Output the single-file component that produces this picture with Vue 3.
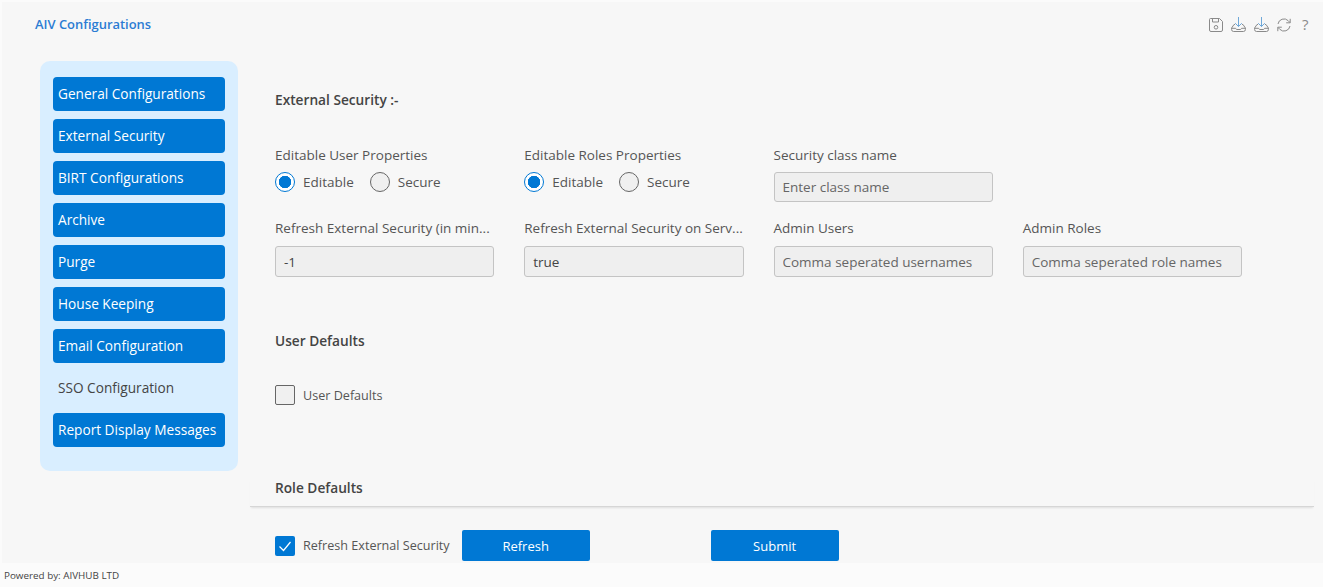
<script setup>
const menu = [
  { label: 'General Configurations', active: true },
  { label: 'External Security', active: true },
  { label: 'BIRT Configurations', active: true },
  { label: 'Archive', active: true },
  { label: 'Purge', active: true },
  { label: 'House Keeping', active: true },
  { label: 'Email Configuration', active: true },
  { label: 'SSO Configuration', active: false },
  { label: 'Report Display Messages', active: true },
];

const radioGroups = ['Editable User Properties', 'Editable Roles Properties'];

const fields = [
  { label: 'Refresh External Security (in min...', value: '-1' },
  { label: 'Refresh External Security on Serv...', value: 'true' },
  { label: 'Admin Users', placeholder: 'Comma seperated usernames' },
  { label: 'Admin Roles', placeholder: 'Comma seperated role names' },
];
</script>

<template>
  <div class="page">
    <div class="main">
      <header class="topbar">
        <span class="app-title">AIV Configurations</span>
        <div class="tools">
          <svg class="tool" viewBox="0 0 14 14"><path d="M1.500.5h9l3 3v8.500a1.500 1.500 0 0 1-1.500 1.500H2A1.500 1.500 0 0 1 .5 12V1.500a1 1 0 0 1 1-1z" /><path d="M3.500.5v3.500h6V.5" /><circle cx="7" cy="9.300" r="1.800" /></svg>
          <svg class="tool wide" viewBox="0 0 15 15"><path class="blue" d="M7.500 0v9.500M4.200 6.200l3.300 3.300 3.300-3.300" /><path d="M4 7.500H3L.6 11v1.500a2 2 0 0 0 2 2h9.800a2 2 0 0 0 2-2V11L12 7.500h-1" /><path d="M.6 11.300h4l1 1.200h4l1-1.200h3.800" /></svg>
          <svg class="tool wide" viewBox="0 0 15 15"><path class="blue" d="M7.500 0v9.500M4.200 6.200l3.300 3.300 3.300-3.300" /><path d="M4 7.500H3L.6 11v1.500a2 2 0 0 0 2 2h9.800a2 2 0 0 0 2-2V11L12 7.500h-1" /><path d="M.6 11.300h4l1 1.200h4l1-1.200h3.800" /></svg>
          <svg class="tool sync" viewBox="0 0 14 14"><path d="M1 6a6 6 0 0 1 10.200-3.300L13 4.500" /><path d="M13.200.8v4h-4" /><path d="M13 8a6 6 0 0 1-10.200 3.300L1 9.500" /><path d="M.8 13.200v-4h4" /></svg>
          <span class="help">?</span>
        </div>
      </header>

      <div class="body">
        <nav class="sidebar">
          <a v-for="item in menu" :key="item.label" class="menu-item" :class="{ on: item.active }">{{ item.label }}</a>
        </nav>

        <section class="content">
          <h3 class="title first">External Security :-</h3>

          <div class="row row-top">
            <div v-for="group in radioGroups" :key="group" class="col">
              <label class="lbl">{{ group }}</label>
              <div class="radios">
                <span class="radio checked"></span><span class="opt">Editable</span>
                <span class="radio"></span><span class="opt">Secure</span>
              </div>
            </div>
            <div class="col">
              <label class="lbl">Security class name</label>
              <input class="box" placeholder="Enter class name" />
            </div>
          </div>

          <div class="row row-fields">
            <div v-for="f in fields" :key="f.label" class="col">
              <label class="lbl">{{ f.label }}</label>
              <input class="box" :value="f.value" :placeholder="f.placeholder" />
            </div>
          </div>

          <h3 class="title user">User Defaults</h3>
          <div class="check-row user-check">
            <span class="check"></span>
            <span class="check-text">User Defaults</span>
          </div>

          <div class="role-head">
            <h3 class="title">Role Defaults</h3>
          </div>

          <div class="actions">
            <div class="check-row">
              <span class="check ticked">
                <svg viewBox="0 0 20 20"><path d="M4.500 10.500 8.500 14.500 15.500 6" /></svg>
              </span>
              <span class="check-text">Refresh External Security</span>
            </div>
            <button class="btn refresh">Refresh</button>
            <button class="btn submit">Submit</button>
          </div>
        </section>
      </div>
    </div>
    <footer class="foot">Powered by: AIVHUB LTD</footer>
  </div>
</template>

<style>
html, body {
  margin: 0;
  background: #fbfbfb;
  overflow: hidden;
}
</style>

<style scoped>
.page {
  height: 587px;
  display: flex;
  flex-direction: column;
  font-family: "Open Sans", "Noto Sans", sans-serif;
  color: #444;
}

.main {
  height: 561px;
  margin: 2px 0 0 2px;
  background: #f7f7f7;
  overflow: hidden;
}

.topbar {
  height: 59px;
  display: flex;
  justify-content: space-between;
  align-items: flex-start;
  padding: 14px 13px 0 33px;
  box-sizing: border-box;
}

.app-title {
  color: #2b7cd3;
  font-size: 12.950px;
  font-weight: 600;
  line-height: 17px;
}

.tools {
  display: flex;
  align-items: center;
  gap: 8px;
  margin-top: 1px;
}

.tool {
  width: 14px;
  height: 14px;
  fill: none;
  stroke: #8a8a8a;
  stroke-width: 1;
}

.tool.wide {
  width: 15px;
  height: 15px;
}

.tool .blue {
  stroke: #6fa8d8;
}

.tool.sync {
  margin-right: 3px;
}

.help {
  color: #8a8a8a;
  font-size: 15px;
  line-height: 15px;
  width: 8px;
}

.body {
  display: flex;
}

.sidebar {
  width: 198px;
  height: 410px;
  margin-left: 38px;
  padding: 16px 13px 0;
  box-sizing: border-box;
  background: #d9eeff;
  border-radius: 10px;
  display: flex;
  flex-direction: column;
  gap: 8px;
  flex-shrink: 0;
}

.menu-item {
  height: 34px;
  line-height: 34px;
  padding-left: 5px;
  border-radius: 4px;
  font-size: 13.650px;
  color: #444;
  white-space: nowrap;
}

.menu-item.on {
  background: #0078d4;
  color: #fff;
}

.content {
  width: 1064px;
  margin-left: 12px;
  padding-left: 25px;
  box-sizing: border-box;
}

.title {
  margin: 0;
  font-size: 13.700px;
  font-weight: 600;
  line-height: 18px;
  color: #444;
}

.title.first {
  margin-top: 30px;
}

.row {
  display: flex;
}

.row-top {
  margin-top: 37px;
}

.row-fields {
  margin-top: 17px;
}

.col {
  width: 249.250px;
  padding-right: 30px;
  box-sizing: border-box;
  flex-shrink: 0;
}

.lbl {
  display: block;
  font-size: 13.500px;
  line-height: 18px;
  color: #555;
  height: 18px;
  white-space: nowrap;
}

.radios {
  display: flex;
  align-items: center;
  height: 30px;
  margin-top: 3px;
}

.radio {
  width: 20px;
  height: 20px;
  border: 1px solid #666;
  border-radius: 50%;
  box-sizing: border-box;
  background: #f0f0f0;
  flex-shrink: 0;
}

.radio.checked {
  border: 1px solid #0078d4;
  background: radial-gradient(circle, #0078d4 0 6px, #fff 6.500px);
}

.opt {
  font-size: 13.500px;
  color: #555;
  margin: 0 16px 0 8px;
}

.box {
  display: block;
  width: 100%;
  height: 31px;
  border: 1px solid #c4c4c4;
  border-radius: 3px;
  background: #efefef;
  box-sizing: border-box;
  padding: 0 8px;
  margin-top: 9px;
  font-family: inherit;
  font-size: 13.500px;
  color: #444;
}

.box::placeholder {
  color: #666;
  opacity: 1;
}

.row-top .box {
  height: 30px;
  margin-top: 8px;
}

.title.user {
  margin-top: 55px;
}

.check-row {
  display: flex;
  align-items: center;
}

.user-check {
  margin-top: 35px;
}

.check {
  width: 20px;
  height: 20px;
  border: 1px solid #666;
  border-radius: 2px;
  background: #f0f0f0;
  box-sizing: border-box;
  flex-shrink: 0;
}

.check.ticked {
  border: none;
  background: #0078d4;
}

.check.ticked svg {
  display: block;
  width: 20px;
  height: 20px;
  fill: none;
  stroke: #fff;
  stroke-width: 1.200;
}

.check-text {
  font-size: 12.600px;
  color: #555;
  margin-left: 8px;
  white-space: nowrap;
}

.role-head {
  margin-top: 74px;
  margin-left: -25px;
  padding: 0 0 9px 25px;
  border-bottom: 1px solid #d6d6d6;
  box-shadow: 0 2px 2px -1px rgba(0, 0, 0, 0.1);
}

.actions {
  display: flex;
  align-items: center;
  margin-top: 23px;
}

.btn {
  width: 128px;
  height: 31px;
  border: none;
  border-radius: 2px;
  background: #0078d4;
  color: #fff;
  font-family: inherit;
  font-size: 13px;
  padding: 0;
}

.refresh {
  margin-left: 12px;
}

.submit {
  margin-left: 121px;
}

.foot {
  font-size: 9.850px;
  line-height: 24px;
  padding-left: 4px;
  color: #444;
}
</style>
